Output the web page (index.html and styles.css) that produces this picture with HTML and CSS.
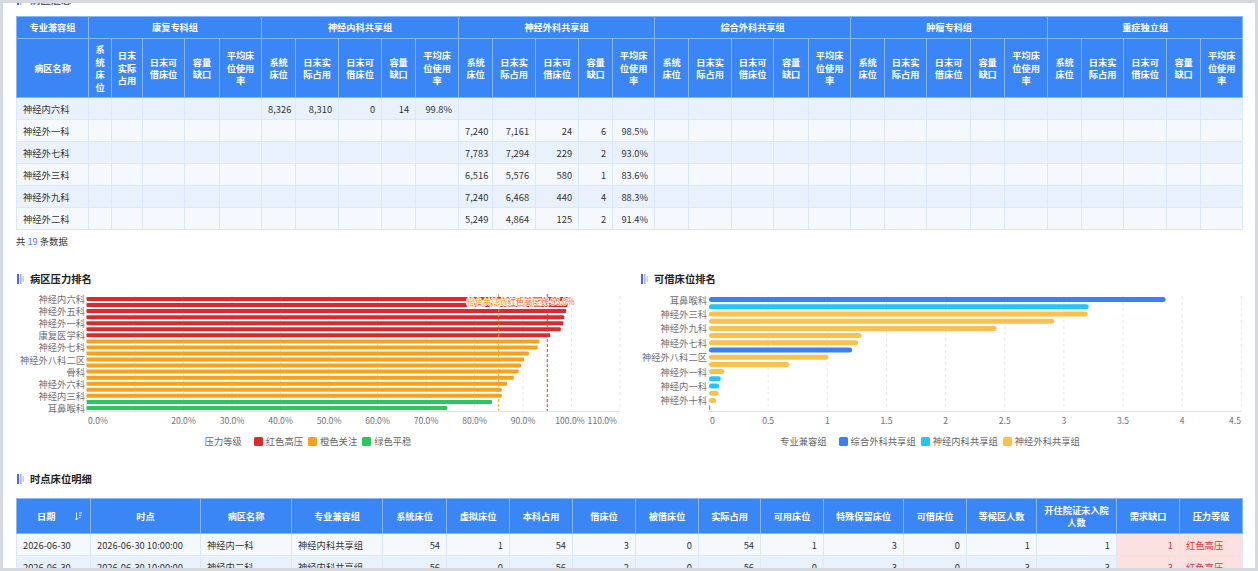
FILE: index.html
```html
<!DOCTYPE html>
<html lang="zh-CN">
<head>
<meta charset="utf-8">
<title>病区床位</title>
<link rel="stylesheet" href="styles.css">
</head>
<body>
<div class="frame">
<div class="card">
  <div class="sec-title cut"><svg class="ticon" width="8" height="10" viewBox="0 0 8 10"><rect class="ti1" x="0" y="0" width="2" height="10"/><rect class="ti2" x="3.2" y="0" width="1.2" height="10"/><rect class="ti3" x="5.6" y="2" width="1.4" height="6"/></svg><span>病区汇总</span></div>

  <table class="grid-table top-table">
    <colgroup>
      <col style="width:72px">
      <col style="width:23px"><col style="width:31px"><col style="width:42px"><col style="width:35px"><col style="width:42px">
      <col style="width:34px"><col style="width:43px"><col style="width:43px"><col style="width:34px"><col style="width:43px">
      <col style="width:34px"><col style="width:43px"><col style="width:43px"><col style="width:34px"><col style="width:42px">
      <col style="width:34px"><col style="width:43px"><col style="width:42px"><col style="width:35px"><col style="width:42px">
      <col style="width:34px"><col style="width:42px"><col style="width:44px"><col style="width:34px"><col style="width:43px">
      <col style="width:34px"><col style="width:42px"><col style="width:43px"><col style="width:34px"><col style="width:42px">
    </colgroup>
    <thead>
      <tr class="h1">
        <th>专业兼容组</th>
        <th colspan="5">康复专科组</th>
        <th colspan="5">神经内科共享组</th>
        <th colspan="5">神经外科共享组</th>
        <th colspan="5">综合外科共享组</th>
        <th colspan="5">肿瘤专科组</th>
        <th colspan="5">重症独立组</th>
      </tr>
      <tr class="h2">
        <th>病区名称</th>
        <th>系统床位</th><th>日末实际占用</th><th>日末可借床位</th><th>容量缺口</th><th>平均床位使用率</th>
        <th>系统床位</th><th>日末实际占用</th><th>日末可借床位</th><th>容量缺口</th><th>平均床位使用率</th>
        <th>系统床位</th><th>日末实际占用</th><th>日末可借床位</th><th>容量缺口</th><th>平均床位使用率</th>
        <th>系统床位</th><th>日末实际占用</th><th>日末可借床位</th><th>容量缺口</th><th>平均床位使用率</th>
        <th>系统床位</th><th>日末实际占用</th><th>日末可借床位</th><th>容量缺口</th><th>平均床位使用率</th>
        <th>系统床位</th><th>日末实际占用</th><th>日末可借床位</th><th>容量缺口</th><th>平均床位使用率</th>
      </tr>
    </thead>
    <tbody>
      <tr class="ra">
        <td>神经内六科</td>
        <td></td><td></td><td></td><td></td><td></td>
        <td class="n">8,326</td><td class="n">8,310</td><td class="n">0</td><td class="n">14</td><td class="n">99.8%</td>
        <td></td><td></td><td></td><td></td><td></td>
        <td></td><td></td><td></td><td></td><td></td>
        <td></td><td></td><td></td><td></td><td></td>
        <td></td><td></td><td></td><td></td><td></td>
      </tr>
      <tr class="rb">
        <td>神经外一科</td>
        <td></td><td></td><td></td><td></td><td></td>
        <td></td><td></td><td></td><td></td><td></td>
        <td class="n">7,240</td><td class="n">7,161</td><td class="n">24</td><td class="n">6</td><td class="n">98.5%</td>
        <td></td><td></td><td></td><td></td><td></td>
        <td></td><td></td><td></td><td></td><td></td>
        <td></td><td></td><td></td><td></td><td></td>
      </tr>
      <tr class="ra">
        <td>神经外七科</td>
        <td></td><td></td><td></td><td></td><td></td>
        <td></td><td></td><td></td><td></td><td></td>
        <td class="n">7,783</td><td class="n">7,294</td><td class="n">229</td><td class="n">2</td><td class="n">93.0%</td>
        <td></td><td></td><td></td><td></td><td></td>
        <td></td><td></td><td></td><td></td><td></td>
        <td></td><td></td><td></td><td></td><td></td>
      </tr>
      <tr class="rb">
        <td>神经外三科</td>
        <td></td><td></td><td></td><td></td><td></td>
        <td></td><td></td><td></td><td></td><td></td>
        <td class="n">6,516</td><td class="n">5,576</td><td class="n">580</td><td class="n">1</td><td class="n">83.6%</td>
        <td></td><td></td><td></td><td></td><td></td>
        <td></td><td></td><td></td><td></td><td></td>
        <td></td><td></td><td></td><td></td><td></td>
      </tr>
      <tr class="ra">
        <td>神经外九科</td>
        <td></td><td></td><td></td><td></td><td></td>
        <td></td><td></td><td></td><td></td><td></td>
        <td class="n">7,240</td><td class="n">6,468</td><td class="n">440</td><td class="n">4</td><td class="n">88.3%</td>
        <td></td><td></td><td></td><td></td><td></td>
        <td></td><td></td><td></td><td></td><td></td>
        <td></td><td></td><td></td><td></td><td></td>
      </tr>
      <tr class="rb">
        <td>神经外二科</td>
        <td></td><td></td><td></td><td></td><td></td>
        <td></td><td></td><td></td><td></td><td></td>
        <td class="n">5,249</td><td class="n">4,864</td><td class="n">125</td><td class="n">2</td><td class="n">91.4%</td>
        <td></td><td></td><td></td><td></td><td></td>
        <td></td><td></td><td></td><td></td><td></td>
        <td></td><td></td><td></td><td></td><td></td>
      </tr>
    </tbody>
  </table>
  <div class="total">共 <span class="total-num">19</span> 条数据</div>

  <div class="charts">
    <div class="chart">
      <div class="sec-title"><svg class="ticon" width="8" height="10" viewBox="0 0 8 10"><rect class="ti1" x="0" y="0" width="2" height="10"/><rect class="ti2" x="3.2" y="0" width="1.2" height="10"/><rect class="ti3" x="5.6" y="2" width="1.4" height="6"/></svg><span>病区压力排名</span></div>
      <svg class="plot" width="606" height="135" viewBox="0 0 606 135">
        <g class="grid">
          <line x1="70.5" y1="5" x2="70.5" y2="120"/><line x1="119" y1="5" x2="119" y2="120"/><line x1="167.5" y1="5" x2="167.5" y2="120"/><line x1="216" y1="5" x2="216" y2="120"/><line x1="264.5" y1="5" x2="264.5" y2="120"/><line x1="313" y1="5" x2="313" y2="120"/><line x1="361.5" y1="5" x2="361.5" y2="120"/><line x1="410" y1="5" x2="410" y2="120"/><line x1="458.5" y1="5" x2="458.5" y2="120"/><line x1="507" y1="5" x2="507" y2="120"/><line x1="555.5" y1="5" x2="555.5" y2="120"/><line x1="604" y1="5" x2="604" y2="120"/>
        </g>
        <line class="axis" x1="70.5" y1="120.5" x2="604" y2="120.5"/>
        <g class="bars-red">
          <rect x="70.5" y="6" width="484" height="4" rx="1"/>
          <rect x="70.5" y="12.1" width="481.1" height="4" rx="1"/>
          <rect x="70.5" y="18.1" width="479.7" height="4" rx="1"/>
          <rect x="70.5" y="24.2" width="477.7" height="4" rx="1"/>
          <rect x="70.5" y="30.2" width="476.8" height="4" rx="1"/>
          <rect x="70.5" y="36.3" width="474.3" height="4" rx="1"/>
          <rect x="70.5" y="42.3" width="463.7" height="4" rx="1"/>
        </g>
        <g class="bars-orange">
          <rect x="70.5" y="48.4" width="453" height="4" rx="1"/>
          <rect x="70.5" y="54.4" width="451.1" height="4" rx="1"/>
          <rect x="70.5" y="60.5" width="442.3" height="4" rx="1"/>
          <rect x="70.5" y="66.5" width="437.5" height="4" rx="1"/>
          <rect x="70.5" y="72.6" width="434.6" height="4" rx="1"/>
          <rect x="70.5" y="78.6" width="432.1" height="4" rx="1"/>
          <rect x="70.5" y="84.7" width="427.3" height="4" rx="1"/>
          <rect x="70.5" y="90.7" width="420.5" height="4" rx="1"/>
          <rect x="70.5" y="96.8" width="415.2" height="4" rx="1"/>
          <rect x="70.5" y="102.8" width="415.2" height="4" rx="1"/>
        </g>
        <g class="bars-green">
          <rect x="70.5" y="108.9" width="405.5" height="4" rx="1"/>
          <rect x="70.5" y="114.9" width="360.8" height="4" rx="1"/>
        </g>
        <line class="ml-orange" x1="482.75" y1="3" x2="482.75" y2="120"/>
        <line class="ml-red" x1="531.25" y1="3" x2="531.25" y2="120"/>
        <text class="ml-lbl-o" x="484" y="9.5" text-anchor="middle" dominant-baseline="central">橙色关注线 85.0%</text>
        <text class="ml-lbl-r" x="525" y="9.5" text-anchor="middle" dominant-baseline="central">红色高压线 95.0%</text>
        <g class="ylab" text-anchor="end" dominant-baseline="central">
          <text x="69" y="8">神经内六科</text>
          <text x="69" y="20.1">神经外五科</text>
          <text x="69" y="32.2">神经外一科</text>
          <text x="69" y="44.3">康复医学科</text>
          <text x="69" y="56.4">神经外七科</text>
          <text x="69" y="68.5">神经外八科二区</text>
          <text x="69" y="80.7">骨科</text>
          <text x="69" y="92.8">神经外六科</text>
          <text x="69" y="104.9">神经内三科</text>
          <text x="69" y="117">耳鼻喉科</text>
        </g>
        <g class="xlab" dominant-baseline="central">
          <text x="72" y="129">0.0%</text>
          <text x="167.5" y="129" text-anchor="middle">20.0%</text>
          <text x="216" y="129" text-anchor="middle">30.0%</text>
          <text x="264.5" y="129" text-anchor="middle">40.0%</text>
          <text x="313" y="129" text-anchor="middle">50.0%</text>
          <text x="361.5" y="129" text-anchor="middle">60.0%</text>
          <text x="410" y="129" text-anchor="middle">70.0%</text>
          <text x="458.5" y="129" text-anchor="middle">80.0%</text>
          <text x="507" y="129" text-anchor="middle">90.0%</text>
          <text x="554" y="129" text-anchor="middle">100.0%</text>
          <text x="601" y="129" text-anchor="end">110.0%</text>
        </g>
      </svg>
      <div class="legend">
        <span class="legend-title">压力等级</span>
        <span class="legend-item"><i class="sw sw-red"></i>红色高压</span>
        <span class="legend-item"><i class="sw sw-orange"></i>橙色关注</span>
        <span class="legend-item"><i class="sw sw-green"></i>绿色平稳</span>
      </div>
    </div>

    <div class="chart">
      <div class="sec-title"><svg class="ticon" width="8" height="10" viewBox="0 0 8 10"><rect class="ti1" x="0" y="0" width="2" height="10"/><rect class="ti2" x="3.2" y="0" width="1.2" height="10"/><rect class="ti3" x="5.6" y="2" width="1.4" height="6"/></svg><span>可借床位排名</span></div>
      <svg class="plot" width="602" height="135" viewBox="0 0 602 135">
        <g class="grid">
          <line x1="69" y1="5" x2="69" y2="120"/><line x1="128.15" y1="5" x2="128.15" y2="120"/><line x1="187.3" y1="5" x2="187.3" y2="120"/><line x1="246.45" y1="5" x2="246.45" y2="120"/><line x1="305.6" y1="5" x2="305.6" y2="120"/><line x1="364.75" y1="5" x2="364.75" y2="120"/><line x1="423.9" y1="5" x2="423.9" y2="120"/><line x1="483.05" y1="5" x2="483.05" y2="120"/><line x1="542.2" y1="5" x2="542.2" y2="120"/><line x1="601.35" y1="5" x2="601.35" y2="120"/>
        </g>
        <line class="axis" x1="69" y1="120.5" x2="601.35" y2="120.5"/>
        <rect class="c-blue" x="69" y="6.1" width="456.6" height="5" rx="2.5"/>
        <rect class="c-cyan" x="69" y="13.3" width="379.7" height="5" rx="2.5"/>
        <rect class="c-yellow" x="69" y="20.5" width="378.6" height="5" rx="2.5"/>
        <rect class="c-yellow" x="69" y="27.7" width="345.4" height="5" rx="2.5"/>
        <rect class="c-yellow" x="69" y="34.9" width="287.5" height="5" rx="2.5"/>
        <rect class="c-yellow" x="69" y="42.1" width="152.6" height="5" rx="2.5"/>
        <rect class="c-yellow" x="69" y="49.3" width="149.1" height="5" rx="2.5"/>
        <rect class="c-blue" x="69" y="56.5" width="143.1" height="5" rx="2.5"/>
        <rect class="c-yellow" x="69" y="63.7" width="119.5" height="5" rx="2.5"/>
        <rect class="c-yellow" x="69" y="70.9" width="80.4" height="5" rx="2.5"/>
        <rect class="c-yellow" x="69" y="78.1" width="15.4" height="5" rx="2.5"/>
        <rect class="c-cyan" x="69" y="85.3" width="11.8" height="5" rx="2.5"/>
        <rect class="c-cyan" x="69" y="92.5" width="10.1" height="5" rx="2.5"/>
        <rect class="c-yellow" x="69" y="99.7" width="9.5" height="5" rx="2.5"/>
        <rect class="c-yellow" x="69" y="106.9" width="7.1" height="5" rx="2.5"/>
        <rect class="c-cyan" x="69" y="114.1" width="1.2" height="5" rx="0.6"/>
        <g class="ylab" text-anchor="end" dominant-baseline="central">
          <text x="67" y="8.6">耳鼻喉科</text>
          <text x="67" y="23">神经外三科</text>
          <text x="67" y="37.4">神经外九科</text>
          <text x="67" y="51.8">神经外七科</text>
          <text x="67" y="66.2">神经外八科二区</text>
          <text x="67" y="80.6">神经外一科</text>
          <text x="67" y="95">神经内一科</text>
          <text x="67" y="109.4">神经外十科</text>
        </g>
        <g class="xlab" dominant-baseline="central">
          <text x="70" y="129">0</text>
          <text x="128.15" y="129" text-anchor="middle">0.5</text>
          <text x="187.3" y="129" text-anchor="middle">1</text>
          <text x="246.45" y="129" text-anchor="middle">1.5</text>
          <text x="305.6" y="129" text-anchor="middle">2</text>
          <text x="364.75" y="129" text-anchor="middle">2.5</text>
          <text x="423.9" y="129" text-anchor="middle">3</text>
          <text x="483.05" y="129" text-anchor="middle">3.5</text>
          <text x="542.2" y="129" text-anchor="middle">4</text>
          <text x="601" y="129" text-anchor="end">4.5</text>
        </g>
      </svg>
      <div class="legend">
        <span class="legend-title">专业兼容组</span>
        <span class="legend-item"><i class="sw sw-blue"></i>综合外科共享组</span>
        <span class="legend-item"><i class="sw sw-cyan"></i>神经内科共享组</span>
        <span class="legend-item"><i class="sw sw-yellow"></i>神经外科共享组</span>
      </div>
    </div>
  </div>

  <div class="sec-title detail-title"><svg class="ticon" width="8" height="10" viewBox="0 0 8 10"><rect class="ti1" x="0" y="0" width="2" height="10"/><rect class="ti2" x="3.2" y="0" width="1.2" height="10"/><rect class="ti3" x="5.6" y="2" width="1.4" height="6"/></svg><span>时点床位明细</span></div>

  <table class="grid-table detail-table">
    <colgroup>
      <col style="width:74px"><col style="width:110px"><col style="width:91px"><col style="width:91px">
      <col style="width:64px"><col style="width:63px"><col style="width:63px"><col style="width:63px">
      <col style="width:63px"><col style="width:62px"><col style="width:63px"><col style="width:80px">
      <col style="width:63px"><col style="width:70px"><col style="width:80px"><col style="width:63px"><col style="width:63px">
    </colgroup>
    <thead>
      <tr class="h3">
        <th><div class="sort-th"><span>日期</span><svg class="sort-icon" width="7" height="9" viewBox="0 0 7 9"><path d="M1.5 0.5V8M0 6.3L1.5 8L3 6.3"/><path d="M4 1H7M4 3.3H6.3M4 5.6H5.5"/></svg></div></th>
        <th>时点</th><th>病区名称</th><th>专业兼容组</th><th>系统床位</th><th>虚拟床位</th><th>本科占用</th><th>借床位</th><th>被借床位</th><th>实际占用</th><th>可用床位</th><th>特殊保留床位</th><th>可借床位</th><th>等候区人数</th><th>开住院证未入院人数</th><th>需求缺口</th><th>压力等级</th>
      </tr>
    </thead>
    <tbody>
      <tr class="rb">
        <td>2026-06-30</td><td>2026-06-30 10:00:00</td><td>神经内一科</td><td>神经内科共享组</td>
        <td class="n">54</td><td class="n">1</td><td class="n">54</td><td class="n">3</td><td class="n">0</td><td class="n">54</td><td class="n">1</td><td class="n">3</td><td class="n">0</td><td class="n">1</td><td class="n">1</td>
        <td class="n hot">1</td><td class="hot">红色高压</td>
      </tr>
      <tr class="ra">
        <td>2026-06-30</td><td>2026-06-30 10:00:00</td><td>神经内二科</td><td>神经内科共享组</td>
        <td class="n">56</td><td class="n">0</td><td class="n">56</td><td class="n">2</td><td class="n">0</td><td class="n">56</td><td class="n">0</td><td class="n">3</td><td class="n">0</td><td class="n">3</td><td class="n">3</td>
        <td class="n hot">3</td><td class="hot">红色高压</td>
      </tr>
    </tbody>
  </table>
</div>
</div>
</body>
</html>
```

FILE: styles.css
```css
* { box-sizing: border-box; }
html, body { margin: 0; padding: 0; }
body {
  background: #d6d9e0;
  font-family: "Noto Sans CJK SC", "Noto Sans", sans-serif;
  color: #333;
  width: 1258px;
  height: 571px;
  overflow: hidden;
}
.frame { padding: 3px 3px 3px 3px; height: 571px; }
.card {
  background: #fff;
  height: 565px;
  overflow: hidden;
  padding: 0 13px;
}

/* section titles */
.sec-title {
  display: flex;
  align-items: center;
  gap: 5px;
  height: 14px;
  line-height: 14px;
  font-size: 10.3px;
  font-weight: 700;
  color: #222;
}
.sec-title.cut { margin-top: -10px; margin-bottom: 9px; color: #666; }
.ticon { flex: none; margin-left: 1px; }
.ti1 { fill: #5160ee; }
.ti2 { fill: #8d9cf6; }
.ti3 { fill: #bfcafb; }

/* tables */
.grid-table {
  width: 1226px;
  border-collapse: collapse;
  table-layout: fixed;
  font-size: 9.3px;
}
.grid-table th {
  background: #3b86f6;
  color: #fff;
  font-weight: 700;
  font-size: 9.2px;
  border: 1px solid #88b6f8;
  padding: 0 5px;
  line-height: 12.5px;
  text-align: center;
  vertical-align: middle;
}
.grid-table td {
  border: 1px solid #dbe7fb;
  padding: 0 6px;
  line-height: 12px;
  white-space: nowrap;
  color: #333;
  overflow: hidden;
}
.grid-table td.n { text-align: right; }
.grid-table tbody tr { height: 22px; }
.top-table tr.h1 { height: 22px; }
.top-table tr.h2 { height: 59px; }
.ra { background: #e9f1fd; }
.rb { background: #f5f9fe; }

.total {
  margin-top: 5px;
  height: 12px;
  line-height: 12px;
  font-size: 9.3px;
  color: #333;
}
.total-num { color: #3b82f6; }

/* charts */
.charts {
  margin-top: 25px;
  display: grid;
  grid-template-columns: 606px 602px;
  column-gap: 18px;
}
.plot { display: block; margin-top: 5px; overflow: visible; }
.grid line { stroke: #e6e9f0; stroke-width: 1; stroke-dasharray: 3 3; }
.axis { stroke: #dfe3ec; stroke-width: 1; }
.bars-red rect { fill: #e0282b; }
.bars-orange rect { fill: #f8a21b; }
.bars-green rect { fill: #2dc55f; }
.c-blue { fill: #3b7ff5; }
.c-cyan { fill: #25c4f6; }
.c-yellow { fill: #fac24c; }
.ml-orange { stroke: #f5a11c; stroke-width: 1; stroke-dasharray: 3 2; }
.ml-red { stroke: #e43a3a; stroke-width: 1; stroke-dasharray: 3 2; }
.ml-lbl-o, .ml-lbl-r {
  font-family: "Noto Sans CJK SC", "Noto Sans", sans-serif;
  font-size: 8.3px;
  stroke: #fff;
  stroke-width: 1.5px;
  paint-order: stroke;
}
.ml-lbl-o { fill: #f5a623; }
.ml-lbl-r { fill: #ee6a2a; }
.ylab text, .xlab text {
  font-family: "Noto Sans CJK SC", "Noto Sans", sans-serif;
  font-size: 9.3px;
  fill: #6e7079;
}
.xlab text { font-size: 8.6px; }

.legend {
  margin-top: 9px;
  padding-right: 22px;
  height: 12px;
  display: flex;
  justify-content: center;
  align-items: center;
  gap: 5px;
  font-size: 9.3px;
  line-height: 12px;
  color: #666;
}
.legend-title { margin-right: 7px; }
.legend-item { display: flex; align-items: center; gap: 3px; }
.sw { display: block; width: 9px; height: 9px; border-radius: 1.5px; }
.sw-red { background: #e0282b; }
.sw-orange { background: #f8a21b; }
.sw-green { background: #2dc55f; }
.sw-blue { background: #3b7ff5; }
.sw-cyan { background: #25c4f6; }
.sw-yellow { background: #fac24c; }

/* detail table */
.detail-title { margin-top: 25px; margin-bottom: 12px; }
.detail-table tr.h3 { height: 35px; }
.detail-table th { line-height: 12px; }
.sort-th {
  display: flex;
  justify-content: space-between;
  align-items: center;
  padding: 0 3px 0 15px;
}
.sort-icon { flex: none; }
.sort-icon path { stroke: #e6efff; stroke-width: 1; fill: none; }
.detail-table td.hot { background: #fde1e1; color: #e3383a; }
```
